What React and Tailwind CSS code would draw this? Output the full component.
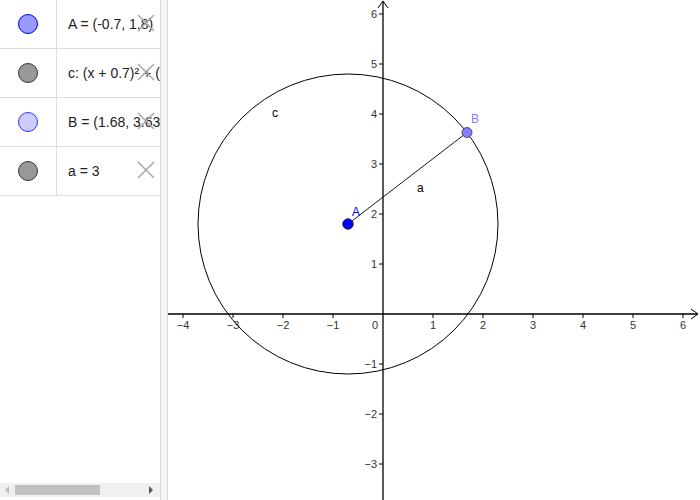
import React from "react";

const rows = [
  { text: "A = (-0.7, 1.8)", fill: "#9999ff", stroke: "#0000cc" },
  { text: "c: (x + 0.7)² + (y − 1.8)² = 9", fill: "#999999", stroke: "#333333" },
  { text: "B = (1.68, 3.63)", fill: "#ccccff", stroke: "#3333ff" },
  { text: "a = 3", fill: "#999999", stroke: "#333333" },
];

function DeleteX() {
  return (
    <svg width="18" height="18" viewBox="0 0 18 18" className="absolute right-[5px] top-[14px]">
      <path d="M1 1L17 17M17 1L1 17" stroke="#aaaaaa" strokeWidth="1.6" fill="none" />
    </svg>
  );
}

function AlgebraRow({ row }) {
  return (
    <div className="relative flex h-[49px] border-b border-[#dddddd] overflow-hidden">
      <div className="w-[57px] shrink-0 border-r border-[#dddddd] flex items-center justify-center">
        <div
          className="w-[20px] h-[20px] rounded-full border"
          style={{ background: row.fill, borderColor: row.stroke }}
        />
      </div>
      <div className="pl-[11px] flex items-center whitespace-nowrap text-[14px] text-[#222222]">
        {row.text}
      </div>
      <DeleteX />
    </div>
  );
}

function Graphics() {
  const ox = 215;
  const oy = 314;
  const s = 50;
  const xs = [-4, -3, -2, -1, 1, 2, 3, 4, 5, 6];
  const ys = [-3, -2, -1, 1, 2, 3, 4, 5, 6];
  const ax = ox + -0.7 * s;
  const ay = oy - 1.8 * s;
  const bx = ox + 1.68 * s;
  const by = oy - 3.63 * s;
  const label = (n) => (n < 0 ? "\u2212" + -n : String(n));

  return (
    <svg width="532" height="500" viewBox="0 0 532 500" className="block" style={{ fontFamily: "'Liberation Sans', Arial, sans-serif" }}>
      <rect width="532" height="500" fill="#ffffff" />
      {/* axes */}
      <line x1="0" y1={oy} x2="530" y2={oy} stroke="#000" strokeWidth="1.3" />
      <line x1={ox} y1="1" x2={ox} y2="500" stroke="#000" strokeWidth="1.3" />
      <path d={`M523 ${oy - 5}L530 ${oy}L523 ${oy + 5}`} stroke="#000" fill="none" strokeWidth="1" />
      <path d={`M${ox - 5} 8L${ox} 1L${ox + 5} 8`} stroke="#000" fill="none" strokeWidth="1" />
      {xs.map((n) => (
        <g key={"x" + n}>
          <line x1={ox + n * s} y1={oy} x2={ox + n * s} y2={oy + 4} stroke="#000" />
          <text x={ox + n * s} y={oy + 15} fontSize="11" textAnchor="middle" fill="#333">
            {label(n)}
          </text>
        </g>
      ))}
      {ys.map((n) => (
        <g key={"y" + n}>
          <line x1={ox - 4} y1={oy - n * s} x2={ox} y2={oy - n * s} stroke="#000" />
          <text x={ox - 6} y={oy - n * s + 4} fontSize="11" textAnchor="end" fill="#333">
            {label(n)}
          </text>
        </g>
      ))}
      <text x={ox - 5} y={oy + 15} fontSize="11" textAnchor="end" fill="#333">0</text>
      {/* circle c */}
      <circle cx={ax} cy={ay} r={3 * s} fill="none" stroke="#000" strokeWidth="1" />
      {/* segment a */}
      <line x1={ax} y1={ay} x2={bx} y2={by} stroke="#000" strokeWidth="0.9" />
      <circle cx={ax} cy={ay} r="5.3" fill="#0000ff" stroke="#222" strokeWidth="0.8" />
      <circle cx={bx} cy={by} r="5" fill="#7f7fff" stroke="#333" strokeWidth="0.8" />
      <text x={ax + 4} y={ay - 8} fontSize="12" fill="#0000ff">A</text>
      <text x={bx + 4} y={by - 10} fontSize="12" fill="#7f7fff">B</text>
      <text x="104" y="117" fontSize="12" fill="#000">c</text>
      <text x="249" y="192" fontSize="12" fill="#000">a</text>
    </svg>
  );
}

export default function App() {
  return (
    <div className="flex w-[700px] h-[500px] bg-white overflow-hidden" style={{ fontFamily: "'Liberation Sans', Arial, sans-serif" }}>
      <div className="w-[161px] shrink-0 flex flex-col border-r border-[#d6d6d6]">
        {rows.map((r) => (
          <AlgebraRow key={r.text} row={r} />
        ))}
        <div className="flex-1" />
        <div className="h-[14px] mb-[3px] bg-[#f0f0f0] flex items-center px-[5px]">
          <span className="w-0 h-0 border-y-[4px] border-y-transparent border-r-[4px] border-r-[#bbbbbb]" />
          <div className="ml-[6px] w-[85px] h-[10px] bg-[#c1c1c1]" />
          <div className="flex-1" />
          <span className="w-0 h-0 border-y-[4px] border-y-transparent border-l-[4px] border-l-[#555555] mr-[2px]" />
        </div>
      </div>
      <div className="w-[7px] shrink-0 bg-[#f4f4f4] border-r border-[#d6d6d6]" />
      <div className="flex-1 overflow-hidden">
        <Graphics />
      </div>
    </div>
  );
}
